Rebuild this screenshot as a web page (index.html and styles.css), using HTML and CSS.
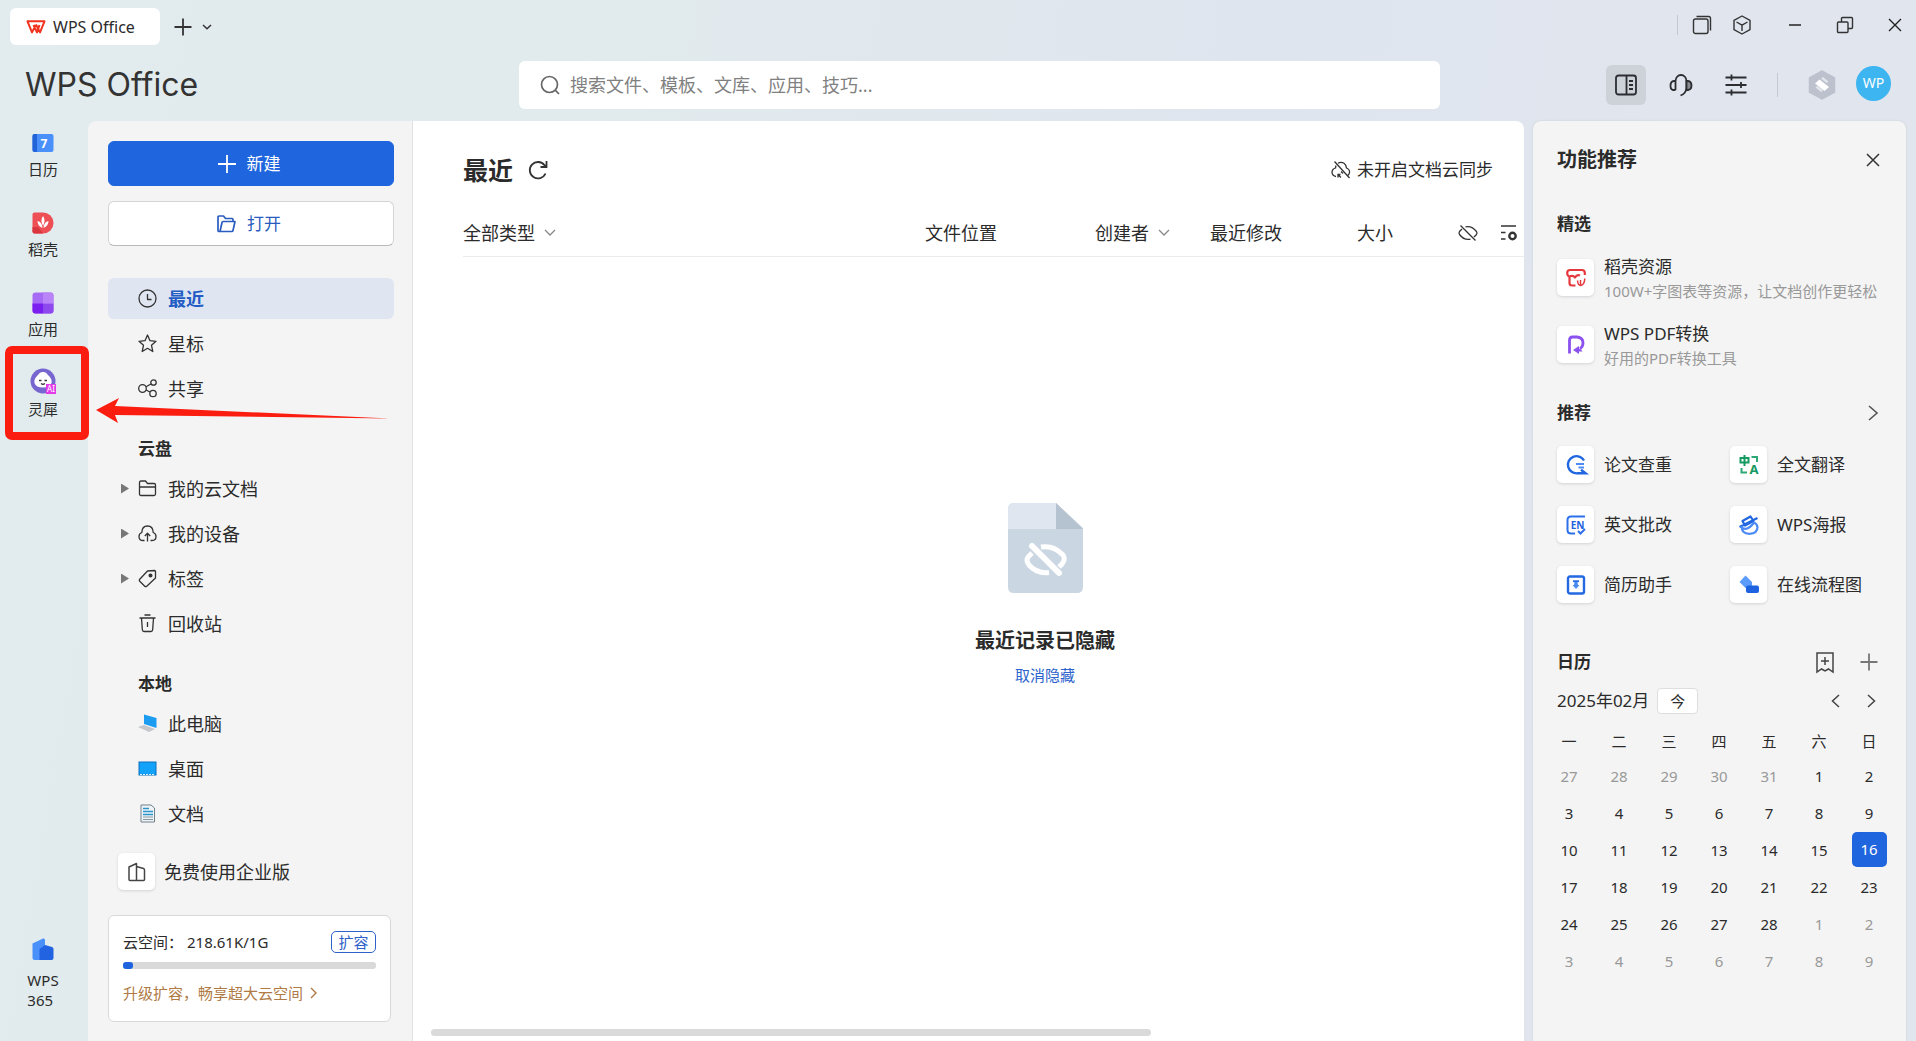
FILE: index.html
```html
<!DOCTYPE html>
<html lang="zh-CN">
<head>
<meta charset="utf-8">
<title>WPS Office</title>
<meta name="viewport" content="width=device-width, initial-scale=1">
<link rel="stylesheet" href="styles.css">
</head>
<body>
<header class="titlebar">
  <div class="tab">
    <svg width="20" height="14" viewBox="0 0 20 14" fill="none" stroke="#f0341f" stroke-width="2" stroke-linejoin="round"><path d="M9.800 5L6 12.400L1.500 1.300H13.500M7.500 5L11 12.400L13.500 5M9.500 1.300H18.500L14 12.400L10 4.500"/></svg>
    <span>WPS Office</span>
  </div>
  <button class="icon-btn" aria-label="新建标签"><svg width="18" height="18" viewBox="0 0 18 18" fill="none" stroke="#333" stroke-width="1.8"><path d="M9 0.5V17.5M0.5 9H17.5"/></svg></button>
  <button class="icon-btn" aria-label="标签列表"><svg width="10" height="6" viewBox="0 0 10 6" fill="none" stroke="#333" stroke-width="1.5"><path d="M1 1L5 4.8L9 1"/></svg></button>
  <div class="window-tools">
    <span class="divider"></span>
    <button class="icon-btn" aria-label="窗口"><svg width="20" height="20" viewBox="0 0 20 20" fill="none" stroke="#333" stroke-width="1.4"><rect x="1.5" y="4" width="14.5" height="14.5" rx="2"/><path d="M4.500 1.500H16.500Q18.500 1.500 18.500 3.500V15.500"/></svg></button>
    <button class="icon-btn" aria-label="应用"><svg width="20" height="20" viewBox="0 0 20 20" fill="none" stroke="#333" stroke-width="1.4" stroke-linejoin="round"><path d="M10 1L18 5.300V14.700L10 19L2 14.700V5.300ZM4.500 7L10 10.200L15.500 7M10 10.200V16"/></svg></button>
    <button class="icon-btn min" aria-label="最小化"><svg width="14" height="14" viewBox="0 0 14 14" stroke="#222" stroke-width="1.5"><path d="M1 7H13"/></svg></button>
    <button class="icon-btn" aria-label="还原"><svg width="18" height="18" viewBox="0 0 18 18" fill="none" stroke="#333" stroke-width="1.4"><rect x="1.500" y="6" width="10.500" height="10.500" rx="1"/><path d="M5.500 6V2.500Q5.500 1.500 6.500 1.500H15.500Q16.500 1.500 16.500 2.500V11.500Q16.500 12.500 15.500 12.500H12"/></svg></button>
    <button class="icon-btn" aria-label="关闭"><svg width="14" height="14" viewBox="0 0 14 14" stroke="#222" stroke-width="1.4"><path d="M1 1L13 13M13 1L1 13"/></svg></button>
  </div>
</header>

<div class="header">
  <div class="brand">WPS Office</div>
  <label class="search">
    <svg width="20" height="20" viewBox="0 0 20 20" fill="none" stroke="#666" stroke-width="1.700"><circle cx="9.500" cy="9.500" r="8"/><path d="M15.200 15.200L19 19"/></svg>
    <input type="text" aria-label="搜索" placeholder="搜索文件、模板、文库、应用、技巧...">
  </label>
  <div class="header-tools">
    <button class="icon-btn pressed" aria-label="侧栏"><svg width="22" height="22" viewBox="0 0 22 22" fill="none" stroke="#2b2d31" stroke-width="1.800"><rect x="1" y="1.500" width="20" height="19" rx="2.500"/><path d="M11.500 1.500V20.500M14 7H18M14 11H18M14 15H18"/></svg></button>
    <button class="icon-btn" aria-label="客服"><svg width="24" height="24" viewBox="0 0 24 24" fill="none" stroke="#2b2d31" stroke-width="1.800"><path d="M6.500 17V8A5.500 6 0 0 1 17.500 8V15Q17 20.500 11.500 22.500M6.500 8H5Q1.500 8.500 1.500 12.500Q1.500 16.500 4 17H6.500"/><path d="M17.500 8H19Q22.500 8.500 22.500 12.500Q22.500 16.500 19 17H17.500Z" fill="#8a8c91"/></svg></button>
    <button class="icon-btn" aria-label="设置"><svg width="22" height="22" viewBox="0 0 22 22" fill="none" stroke="#2b2d31" stroke-width="1.800"><path d="M0.500 3.500H21.500M0.500 11H21.500M0.500 18.500H21.500M6.500 0.500V6.500M16 8V14M6.500 15.500V21.500"/></svg></button>
    <span class="divider"></span>
    <button class="icon-btn" aria-label="会员"><svg width="28" height="30" viewBox="0 0 28 30"><path d="M14 1.500L26 8V22L14 28.500L2 22V8Z" fill="#bcc1cd" stroke="#bcc1cd" stroke-width="2.500" stroke-linejoin="round"/><path d="M7 13.500L11.500 9.500L21 17L16.500 21Z" fill="#fff"/><path d="M13 8.500L15 7L20.500 11.500L18.500 13ZM7.500 17.500L9.500 16L15 20.500L13 22Z" fill="#e2e5eb"/></svg></button>
    <button class="avatar">WP</button>
  </div>
</div>

<div class="workspace">
  <nav class="rail">
    <a href="#"><svg width="22" height="22" viewBox="0 0 22 22"><rect x="0.500" y="2" width="21" height="18" rx="2" fill="#4a90fb"/><path d="M2.500 2H5V20H2.500Q0.500 20 0.500 18V4Q0.500 2 2.500 2Z" fill="#2163d8"/><text x="12" y="16" text-anchor="middle" class="glyph-7">7</text></svg><span>日历</span></a>
    <a href="#"><svg width="22" height="22" viewBox="0 0 22 22"><path d="M2.500 0.500H11A10.500 10.500 0 0 1 11 21.500H2.500Q0.500 21.500 0.500 19.500V2.500Q0.500 0.500 2.500 0.500Z" fill="#ee4f55"/><path d="M0.500 15V19.500Q0.500 21.500 2.500 21.500H11L6 15Z" fill="#d93640"/><path d="M11 4Q14 8 11 14Q8 8 11 4ZM5.500 9Q10 9.500 10.500 16Q5.500 14 5.500 9ZM16.500 9Q12 9.500 11.500 16Q16.500 14 16.500 9Z" fill="#fff"/></svg><span>稻壳</span></a>
    <a href="#"><svg width="22" height="22" viewBox="0 0 22 22"><rect x="0.500" y="0.500" width="21" height="21" rx="3" fill="#a66bf5"/><path d="M0.500 11.500H11V21.500H3.500Q0.500 21.500 0.500 18.500Z" fill="#7a1ff0"/><path d="M11 11.500H21.500V18.500Q21.500 21.500 18.500 21.500H11Z" fill="#8d48ee"/><path d="M11 0.500H18.500Q21.500 0.500 21.500 3.500V11.500H11Z" fill="#b884f8"/></svg><span>应用</span></a>
    <a href="#"><svg width="26" height="26" viewBox="0 0 26 26"><circle cx="13" cy="13" r="12.500" fill="#7766d0"/><path d="M13 4Q16 3.500 18 7Q22.500 11 21.500 15Q20 19.500 13 19.500Q6 19.500 4.500 15Q3.500 11 8 7Q10 3.500 13 4Z" fill="#fff"/><path d="M9 12.500H11.500M14.500 12.500H17M11 15.500Q13 17 15 15.500" stroke="#333" stroke-width="1.300" fill="none"/><rect x="16" y="16" width="10" height="10" fill="#e23bea"/><text x="21" y="24" text-anchor="middle" class="glyph-ai">AI</text></svg><span>灵犀</span></a>
    <a href="#" class="rail-bottom"><svg width="22" height="24" viewBox="0 0 22 24"><path d="M0.500 6.500L11 1.500Q13 1 13 3V23H2.500Q0.500 23 0.500 21Z" fill="#4a90fb"/><path d="M13 8L20 10Q21.500 10.500 21.500 12V21Q21.500 23 19.500 23H7.500V12Z" fill="#2163e0"/></svg><span>WPS<br>365</span></a>
  </nav>

  <aside class="sidebar">
    <button class="btn primary"><svg width="18" height="18" viewBox="0 0 18 18" fill="none" stroke="#fff" stroke-width="1.800"><path d="M9 0V18M0 9H18"/></svg>新建</button>
    <button class="btn"><svg width="19" height="18" viewBox="0 0 19 18" fill="none" stroke="#2a5cc0" stroke-width="1.700" stroke-linejoin="round"><path d="M3 16.500H2Q1 16.500 1 15.500V2Q1 1 2 1H6.500L8.500 3.500H15Q16 3.500 16 4.500V6.500M3 16.500L5 7.500Q5.200 6.500 6.200 6.500H18L16 15.500Q15.800 16.500 14.800 16.500Z"/></svg>打开</button>
    <ul class="nav">
      <li><a href="#" class="row active"><i class="caret"></i><svg class="ic" viewBox="0 0 19 19"><circle cx="9.500" cy="9.500" r="8.500"/><path d="M9.500 5V10.500H13.500"/></svg>最近</a></li>
      <li><a href="#" class="row"><i class="caret"></i><svg class="ic" viewBox="0 0 19 19"><path d="M9.500 1L12 6.700L18 7.300L13.500 11.300L14.800 17.500L9.500 14.300L4.200 17.500L5.500 11.300L1 7.300L7 6.700Z"/></svg>星标</a></li>
      <li><a href="#" class="row"><i class="caret"></i><svg class="ic" viewBox="0 0 19 19"><circle cx="4.500" cy="9.500" r="3.800"/><circle cx="15.500" cy="3.500" r="2.700"/><circle cx="15" cy="14.500" r="3.200"/><path d="M8 7.700L13 5M8 11L12 13"/></svg>共享</a></li>
    </ul>
    <h2 class="nav-title">云盘</h2>
    <ul class="nav">
      <li><a href="#" class="row"><i class="caret open"></i><svg class="ic" viewBox="0 0 19 19"><path d="M1.500 3.500Q1.500 2 3 2H7.500L9.500 4.500H16Q17.500 4.500 17.500 6V15Q17.500 16.500 16 16.500H3Q1.500 16.500 1.500 15ZM1.500 8H17.500"/></svg>我的云文档</a></li>
      <li><a href="#" class="row"><i class="caret open"></i><svg class="ic" viewBox="0 0 19 19"><path d="M6.500 16.500H5Q1 16.500 1 12.500Q1 9.500 3.800 8.500Q4 2 9.500 2Q15 2 15.200 8.500Q18 9.500 18 12.500Q18 16.500 14 16.500H12.500M9.500 17.500V9.500M6.800 12L9.500 9.300L12.200 12"/></svg>我的设备</a></li>
      <li><a href="#" class="row"><i class="caret open"></i><svg class="ic" viewBox="0 0 19 19"><path d="M1.500 10.500L9.500 2L16.500 1.500Q17.500 1.500 17.500 2.500L17.500 9L8.500 17.500Q7.500 18 6.500 17L1.500 12Q1 11.200 1.500 10.500Z"/><circle cx="12.500" cy="6.500" r="1.400" fill="#333"/></svg>标签</a></li>
      <li><a href="#" class="row"><i class="caret"></i><svg class="ic" viewBox="0 0 19 19"><path d="M1.500 4H17.500M6.500 1H12.500M3.500 4L4.300 15.500Q4.500 17.500 6 17.500H13Q14.500 17.500 14.700 15.500L15.500 4M9.500 8V13"/></svg>回收站</a></li>
    </ul>
    <h2 class="nav-title">本地</h2>
    <ul class="nav">
      <li><a href="#" class="row"><i class="caret"></i><svg class="pic" viewBox="0 0 19 19"><path d="M6 0.500L18.500 4V14L6 10Z" fill="#1b9cf0"/><path d="M0 13L6 11L17 15L11 18Z" fill="#c3c7cb"/></svg>此电脑</a></li>
      <li><a href="#" class="row"><i class="caret"></i><svg class="pic" viewBox="0 0 19 19"><rect x="1" y="3" width="17" height="13" fill="#12a2fa" stroke="#0b6fbd"/><path d="M2 15.500H17" stroke="#d7f0ff" stroke-dasharray="2 1"/></svg>桌面</a></li>
      <li><a href="#" class="row"><i class="caret"></i><svg class="pic" viewBox="0 0 19 19"><path d="M3 1H13L16.500 4V18H3Z" fill="#eef5f9" stroke="#72808a"/><path d="M5 4.500H11M5 7.500H15M5 10.500H15" stroke="#2b93c9" stroke-width="1.300"/><path d="M5 13H15M5 15.500H15" stroke="#8b979e"/></svg>文档</a></li>
    </ul>
    <a href="#" class="enterprise"><span class="tile"><svg width="20" height="20" viewBox="0 0 20 20" fill="none" stroke="#444" stroke-width="1.500" stroke-linejoin="round"><path d="M9.500 18.500H3Q2 18.500 2 17.500V5L9.500 1.500ZM9.500 4.500L16.500 6.500Q17.500 7 17.500 8V17.500Q17.500 18.500 16.500 18.500H9.500"/></svg></span>免费使用企业版</a>
    <section class="storage">
      <div class="storage-top"><span>云空间：</span><span class="amount">218.61K/1G</span><button class="expand">扩容</button></div>
      <div class="bar"><div class="bar-fill" style="width:4%"></div></div>
      <a href="#" class="upgrade">升级扩容，畅享超大云空间<svg width="7" height="12" viewBox="0 0 7 12" fill="none" stroke="#b07a45" stroke-width="1.400"><path d="M1 1L6 6L1 11"/></svg></a>
    </section>
  </aside>

  <main class="main">
    <div class="main-head">
      <h1>最近</h1>
      <button class="icon-btn" aria-label="刷新"><svg width="20" height="20" viewBox="0 0 20 20" fill="none" stroke="#333" stroke-width="1.800"><path d="M17.500 13.500A8.200 8.200 0 1 1 16.500 5.200L18 7M18.500 1V7H12.500"/></svg></button>
      <button class="sync"><svg width="20" height="18" viewBox="0 0 20 18" fill="none" stroke="#333" stroke-width="1.300"><path d="M7 2.200Q10 0.500 13 2.200Q15 3.500 15.500 7Q19 8.500 18.500 11.500Q18.300 13 17 14.300M5 4.500L4.500 7Q1 8 1 11.500Q1.500 15 5 15.500M3.500 0.500L18.500 17M7 13.500L10 16.500M7 16.500V13.500H9.500M10 10.500L12 12.500"/></svg>未开启文档云同步</button>
    </div>
    <div class="list">
      <table class="files">
        <thead><tr>
          <th><button>全部类型<svg width="12" height="7" viewBox="0 0 12 7"><path d="M1 1L6 6L11 1"/></svg></button></th>
          <th class="c-place">文件位置</th>
          <th class="c-owner"><button>创建者<svg width="12" height="7" viewBox="0 0 12 7"><path d="M1 1L6 6L11 1"/></svg></button></th>
          <th class="c-time">最近修改</th>
          <th class="c-size">大小</th>
          <th class="c-tools"><div class="tools"><button class="icon-btn" aria-label="隐藏"><svg width="20" height="16" viewBox="0 0 20 16" fill="none" stroke="#333" stroke-width="1.300"><path d="M7.500 1.800Q14 0.500 18.500 6.500Q19.500 8 18.500 9.500L16 12M4 4L1.500 6.500Q0.500 8 1.500 9.500Q6 15.500 12.500 14.200M2.500 0.500L17.500 15.500"/></svg></button>
          <button class="icon-btn" aria-label="列表设置"><svg width="18" height="18" viewBox="0 0 18 18" fill="none" stroke="#333" stroke-width="1.500"><path d="M1 2H16M1 8.500H5.500M1 15H5.500"/><circle cx="12.500" cy="12" r="3.200" stroke-width="2.400"/></svg></button></div></th>
        </tr></thead>
      </table>
      <div class="empty">
        <svg width="75" height="90" viewBox="0 0 75 90"><path d="M6 0H48L75 25V84Q75 90 69 90H6Q0 90 0 84V6Q0 0 6 0Z" fill="#cbd6e3"/><path d="M6 0H48V26H0V6Q0 0 6 0Z" fill="#dfe6f0"/><path d="M48 0L75 26H48Z" fill="#b5c2cf"/><g fill="none" stroke="#fff" stroke-width="5"><path d="M33 44Q46 42 55 52Q58 56 54 61L51 64M24 50L21 53Q17 57 21 62Q29 71 41 69.500"/><path d="M24 43L51 70" stroke-width="6" stroke-linecap="round"/></g></svg>
        <strong>最近记录已隐藏</strong>
        <a href="#">取消隐藏</a>
      </div>
    </div>
    <div class="scroll-x"><div class="thumb"></div></div>
  </main>

  <aside class="panel">
    <div class="panel-head"><h2>功能推荐</h2><button class="icon-btn" aria-label="关闭"><svg width="14" height="14" viewBox="0 0 14 14" stroke="#333" stroke-width="1.500"><path d="M1 1L13 13M13 1L1 13"/></svg></button></div>
    <h3>精选</h3>
    <div class="picks">
      <a href="#" class="pick"><span class="tile"><svg width="20" height="20" viewBox="0 0 20 20" fill="none" stroke="#e5393f" stroke-width="2.200" stroke-linejoin="round"><path d="M3.500 8.500Q1.200 8 1.200 5Q1.200 2 4 2H16Q18.800 2 18.800 5V7M3.500 8.500Q7 7 9 9.500Q11 6 14 7.500M3.500 9V15Q3.500 17.500 6 17.500H9.500"/><path d="M11.500 12.500Q12 17.500 14.500 17.500Q18.500 17 18.800 10.500M14.500 17V12" stroke-width="1.500"/></svg></span><span class="pick-text"><b>稻壳资源</b><small>100W+字图表等资源，让文档创作更轻松</small></span></a>
      <a href="#" class="pick"><span class="tile"><svg width="20" height="20" viewBox="0 0 20 20" fill="none" stroke="#8b52ee" stroke-width="2.800"><path d="M3.500 18.500V5Q3.500 2 6.500 2H11Q17 2.500 17 8Q17 12 14 13.500"/><path d="M7 15L13 11V13.500Q15.500 14 16.500 16.500Q15 16.500 13 16.500V19Z" fill="#8b52ee" stroke="none"/></svg></span><span class="pick-text"><b>WPS PDF转换</b><small>好用的PDF转换工具</small></span></a>
    </div>
    <div class="section-head"><h3>推荐</h3><button class="icon-btn" aria-label="更多"><svg width="10" height="16" viewBox="0 0 10 16" fill="none" stroke="#555" stroke-width="1.600"><path d="M1 1L9 8L1 15"/></svg></button></div>
    <div class="tools-grid">
      <a href="#"><span class="tile"><svg width="20" height="20" viewBox="0 0 20 20" fill="none" stroke="#1f66e0" stroke-width="2.400"><path d="M18 5.500A8.600 8.600 0 1 0 12 18.200H19.500L15 14.800"/><path d="M10 9H18M12.500 12.500H18" stroke="#4c8bf5" stroke-width="1.800"/></svg></span>论文查重</a>
      <a href="#"><span class="tile"><svg width="22" height="22" viewBox="-1 0 22 22" fill="none" stroke="#2fa878" stroke-width="2"><path d="M1.500 4H9.500V8.500H1.500ZM5.500 1V12" stroke="#159a62"/><path d="M12.500 3H18V8M2.500 14V18.500H8"/><text x="15" y="20" text-anchor="middle" class="glyph-a">A</text></svg></span>全文翻译</a>
      <a href="#"><span class="tile"><svg width="20" height="20" viewBox="0 0 20 20" fill="none" stroke="#2d71ea" stroke-width="2"><path d="M19 1.500H5Q1.500 1.500 1.500 5V15Q1.500 18.500 5 18.500H9M12 16L14.500 18.500L19 14"/><text x="11.500" y="13.500" text-anchor="middle" class="glyph-en">EN</text></svg></span>英文批改</a>
      <a href="#"><span class="tile"><svg width="20" height="20" viewBox="0 0 20 20" fill="none" stroke="#1f66e0" stroke-width="2.200" stroke-linejoin="round"><path d="M3.500 6L11.500 1.500L14.500 6L6 10.500ZM0.500 12L18.500 3"/><path d="M3 11Q2 18.800 10.500 18.800Q18.500 18.500 18.500 12Q18 8.500 14.500 7.500M3.500 13Q9 16 15 7.500" stroke="#4c8bf5"/></svg></span>WPS海报</a>
      <a href="#"><span class="tile"><svg width="20" height="20" viewBox="0 0 20 20" fill="none" stroke="#2468e2" stroke-width="2.400"><rect x="2" y="1.500" width="16" height="17" rx="2"/><path d="M7 6.200H13" stroke-width="1.800"/><path d="M8.500 7H11.500L12 10H13.500L10 14L6.500 10H8Z" fill="#4c8bf5" stroke="none"/></svg></span>简历助手</a>
      <a href="#"><span class="tile"><svg width="20" height="20" viewBox="0 0 20 20"><path d="M6.500 0.500L13 7V13H6.500L0.500 7Z" fill="#5b9bfb"/><rect x="7" y="10.500" width="13" height="7.500" rx="2" fill="#1f62e0"/></svg></span>在线流程图</a>
    </div>
    <div class="section-head cal-head"><h3>日历</h3>
      <button class="icon-btn" aria-label="添加书签"><svg width="18" height="21" viewBox="0 0 18 21" fill="none" stroke="#444" stroke-width="1.500"><path d="M1 1H17V20L12.500 17L9 19L5.500 17L1 20ZM9 5V13M5 9H13"/></svg></button>
      <button class="icon-btn" aria-label="添加日程"><svg width="18" height="18" viewBox="0 0 18 18" stroke="#777" stroke-width="1.800"><path d="M9 0.500V17.500M0.500 9H17.500"/></svg></button>
    </div>
    <div class="month"><span>2025年02月</span><button class="today-btn">今</button>
      <span class="pager"><button class="icon-btn" aria-label="上月"><svg width="9" height="14" viewBox="0 0 9 14" fill="none" stroke="#444" stroke-width="1.500"><path d="M8 1L1.500 7L8 13"/></svg></button><button class="icon-btn" aria-label="下月"><svg width="9" height="14" viewBox="0 0 9 14" fill="none" stroke="#444" stroke-width="1.500"><path d="M1 1L7.500 7L1 13"/></svg></button></span>
    </div>
    <table class="calendar">
      <thead><tr><th>一</th><th>二</th><th>三</th><th>四</th><th>五</th><th>六</th><th>日</th></tr></thead>
      <tbody>
        <tr><td class="off">27</td><td class="off">28</td><td class="off">29</td><td class="off">30</td><td class="off">31</td><td>1</td><td>2</td></tr>
        <tr><td>3</td><td>4</td><td>5</td><td>6</td><td>7</td><td>8</td><td>9</td></tr>
        <tr><td>10</td><td>11</td><td>12</td><td>13</td><td>14</td><td>15</td><td><span class="today">16</span></td></tr>
        <tr><td>17</td><td>18</td><td>19</td><td>20</td><td>21</td><td>22</td><td>23</td></tr>
        <tr><td>24</td><td>25</td><td>26</td><td>27</td><td>28</td><td class="off">1</td><td class="off">2</td></tr>
        <tr><td class="off">3</td><td class="off">4</td><td class="off">5</td><td class="off">6</td><td class="off">7</td><td class="off">8</td><td class="off">9</td></tr>
      </tbody>
    </table>
  </aside>
</div>

<div class="callout"></div>
<svg class="callout-arrow" width="296" height="28" viewBox="0 0 296 28"><path d="M0 12L23 0L19 8L294 20.500L19 17L22 25Z" fill="#fb1d10"/></svg>
</body>
</html>
```
FILE: styles.css
```css
* { box-sizing: border-box; }

body {
  margin: 0;
  min-height: 100vh;
  display: flex;
  flex-direction: column;
  position: relative;
  font-family: "Noto Sans", "Noto Sans CJK SC", sans-serif;
  font-size: 18px;
  line-height: 24px;
  color: #2b2b2b;
  background: linear-gradient(100deg, #e2ebed 0%, #e1eaed 30%, #dfe5ee 60%, #e1e5ee 100%);
}

svg { display: block; flex: none; overflow: visible; }
a { color: inherit; text-decoration: none; }
ul { list-style: none; margin: 0; padding: 0; }
h1, h2, h3 { margin: 0; }
button { font: inherit; color: inherit; margin: 0; padding: 0; border: 0; background: none; }

.icon-btn { display: flex; align-items: center; justify-content: center; }
.divider { width: 1px; background: #c3c9d2; }

/* Title bar */
.titlebar { display: flex; align-items: center; height: 53px; padding: 0 14px 0 10px; }
.tab {
  display: flex; align-items: center; gap: 7px;
  width: 150px; height: 37px; padding-left: 16px;
  background: #fff; border-radius: 6px;
  font-size: 16px;
}
.titlebar > .icon-btn { margin-left: 14px; }
.titlebar > .icon-btn + .icon-btn { margin-left: 10px; }
.window-tools { display: flex; align-items: center; gap: 20px; margin-left: auto; height: 32px; padding-bottom: 4px; }
.window-tools .divider { height: 20px; margin-right: -6px; }
.window-tools .min { margin-left: 16px; }
.window-tools .min ~ .icon-btn { margin-left: 14px; }

/* Brand, search and account */
.header {
  display: grid;
  grid-template-columns: 494fr 921fr 451fr;
  align-items: center;
  height: 68px; padding: 0 25px 4px 25px;
}
.brand { font-family: Inter, sans-serif; font-size: 32px; line-height: 36px; color: #333; }
.search {
  display: flex; align-items: center; gap: 8px;
  height: 48px; padding: 0 21px;
  background: #fff; border-radius: 6px;
}
.search input { flex: 1; min-width: 0; border: 0; outline: 0; background: none; font: inherit; }
.search input::placeholder { color: #808080; opacity: 1; }
.header-tools { display: flex; align-items: center; justify-content: flex-end; gap: 30px; }
.header-tools .divider { height: 24px; }
.pressed { width: 40px; height: 40px; border-radius: 6px; background: #cdd1d8; margin-right: -7px; }
.header-tools .icon-btn + .icon-btn + .icon-btn { margin-left: 2px; }
.avatar { width: 35px; height: 35px; border-radius: 50%; background: #3db5f0; color: #fff; font-size: 14px; margin: 0 0 4px -10px; }

/* Workspace */
.workspace { flex: 1; display: flex; padding-right: 10px; }

.rail { width: 88px; display: flex; flex-direction: column; padding: 8px 2px 31px 0; }
.rail a {
  display: flex; flex-direction: column; align-items: center; justify-content: flex-end; gap: 5px;
  height: 50px; margin-bottom: 30px;
  font-size: 15px; line-height: 20px;
}
.rail .rail-bottom { height: auto; margin: auto 0 0; gap: 9px; }
.glyph-7 { font: bold 12px "Noto Sans", sans-serif; fill: #fff; }
.glyph-ai { font: 8px "Noto Sans", sans-serif; fill: #fff; }

.sidebar {
  width: 325px; padding: 20px 18px 18px 20px;
  background: #f4f4f4; border-right: 1px solid #dfe1e4; border-top-left-radius: 8px;
}
.btn {
  display: flex; align-items: center; justify-content: center; gap: 11px;
  width: 100%; height: 45px; margin-bottom: 15px; padding-right: 4px;
  font-size: 17px; color: #2a5cc0;
  background: #fff; border: 1px solid #d4d4d6; border-bottom-color: #b9b9bb; border-radius: 6px;
}
.btn.primary { color: #fff; background: #1f65de; border-color: #1f65de; }
.btn + .btn { margin-bottom: 32px; }
.nav { display: grid; gap: 4px; }
.row { display: flex; align-items: center; height: 41px; padding-left: 13px; border-radius: 6px; }
.row.active { background: #dfe6f2; color: #225cc4; font-weight: bold; }
.caret { width: 8px; height: 10px; margin-right: 9px; }
.caret.open { background: #777; clip-path: polygon(0 0, 100% 50%, 0 100%); }
.ic { width: 19px; height: 19px; fill: none; stroke: #333; stroke-width: 1.300; stroke-linejoin: round; }
.pic { width: 19px; height: 19px; }
.ic, .pic { margin-right: 11px; }
.nav-title { height: 59px; padding: 20px 0 0 30px; font-size: 17px; line-height: 39px; }
.tile {
  display: flex; align-items: center; justify-content: center; flex: none;
  width: 37px; height: 37px;
  background: #fff; border-radius: 5px; box-shadow: 0 1px 3px #d2d3d6;
}
.enterprise { display: flex; align-items: center; gap: 9px; margin: 19px 0 25px 10px; }
.storage { width: 283px; height: 107px; padding: 14px; background: #fff; border: 1px solid #d9d9db; border-radius: 6px; font-size: 15px; }
.storage-top { display: flex; align-items: center; }
.amount { margin-left: 4px; }
.expand { width: 45px; height: 22px; margin-left: auto; border: 1px solid #2e62c8; border-radius: 5px; line-height: 20px; color: #2e62c8; }
.bar { height: 7px; margin: 8px 0 12px; background: #d9d9d9; border-radius: 3px; }
.bar-fill { height: 7px; background: #1f62de; border-radius: 3px; }
.upgrade { display: flex; align-items: center; gap: 7px; color: #b07a45; }

/* File list */
.main {
  flex: 1; min-width: 0; overflow: hidden;
  display: flex; flex-direction: column;
  background: #fff; border-top-right-radius: 8px;
}
.main-head { display: flex; align-items: center; height: 98px; padding: 0 31px 0 50px; }
h1 { font-size: 25px; line-height: 36px; }
.main-head > .icon-btn { margin-left: 15px; }
.sync { display: flex; align-items: center; gap: 6px; margin-left: auto; font-size: 17px; }
.list { flex: 1; padding-left: 50px; }
.files { width: 100%; table-layout: fixed; border-collapse: collapse; }
.files th { height: 37px; padding: 0 0 9px; text-align: left; font-weight: normal; border-bottom: 1px solid #ececee; }
.files th > button { display: flex; align-items: center; gap: 9px; }
.files th > button svg { fill: none; stroke: #888; stroke-width: 1.300; }
.c-place { width: 170px; }
.c-owner { width: 115px; }
.c-time { width: 147px; }
.c-size { width: 101px; }
.c-tools { width: 66px; }
.tools { display: flex; gap: 22px; }
.empty {
  display: flex; flex-direction: column; align-items: center;
  width: calc(100% + 103px); padding-top: 246px;
}
.empty strong { margin-top: 36px; font-size: 20px; }
.empty a { margin-top: 10px; font-size: 15px; color: #2c63cc; }
.scroll-x { padding: 0 18px 5px; }
.thumb { width: 67%; height: 7px; border-radius: 4px; background: #dadada; }

/* Recommendations */
.panel {
  width: 373px; margin-left: 9px; padding: 21px 12px 0 24px;
  background: #f4f4f4; border-radius: 8px 8px 0 0; box-shadow: 0 0 2px #c4cad4;
}
.panel-head, .section-head { display: flex; align-items: center; justify-content: space-between; padding-right: 14px; }
.panel-head { height: 36px; margin-bottom: 34px; }
.panel h2 { font-size: 20px; }
.panel h3 { font-size: 17px; }
.picks { display: grid; gap: 19px; margin-top: 19px; }
.pick { display: flex; gap: 10px; height: 48px; }
.pick .tile { margin-top: 4px; }
.pick-text { display: flex; flex-direction: column; white-space: nowrap; }
.pick b { font-size: 17px; font-weight: normal; }
.pick small { font-size: 15px; color: #999; }
.section-head { margin-top: 31px; padding-right: 16px; }
.tools-grid { display: grid; grid-template-columns: 173px 1fr; gap: 23px 0; margin-top: 21px; font-size: 17px; }
.tools-grid a { display: flex; align-items: center; gap: 10px; }
.glyph-en { font: bold 10px "Noto Sans", sans-serif; fill: #1f62e0; stroke: none; }
.glyph-a { font: bold 13px "Noto Sans", sans-serif; fill: #159a62; stroke: none; }
.cal-head { margin-top: 47px; gap: 26px; }
.cal-head h3 { margin-right: auto; }
.month { display: flex; align-items: center; height: 26px; margin-top: 14px; font-size: 17px; }
.today-btn { width: 41px; height: 26px; margin-left: 8px; font-size: 15px; line-height: 24px; background: #fff; border: 1px solid #dedede; border-radius: 4px; }
.pager { display: flex; gap: 27px; margin-left: auto; padding-right: 18px; }
.calendar { width: 350px; margin: 10px 0 0 -13px; table-layout: fixed; border-collapse: collapse; font-size: 15px; text-align: center; }
.calendar th { height: 33px; padding: 0; font-weight: normal; }
.calendar td { height: 37px; padding: 0; }
.off { color: #999; }
.today { display: block; width: 35px; margin: 0 auto; line-height: 35px; color: #fff; background: #1f65de; border-radius: 5px; }

/* Highlight over the rail */
.callout { position: absolute; left: 5px; top: 346px; width: 84px; height: 94px; border: 8px solid #fb1d10; border-radius: 7px; pointer-events: none; }
.callout-arrow { position: absolute; left: 96px; top: 398px; pointer-events: none; }
```
